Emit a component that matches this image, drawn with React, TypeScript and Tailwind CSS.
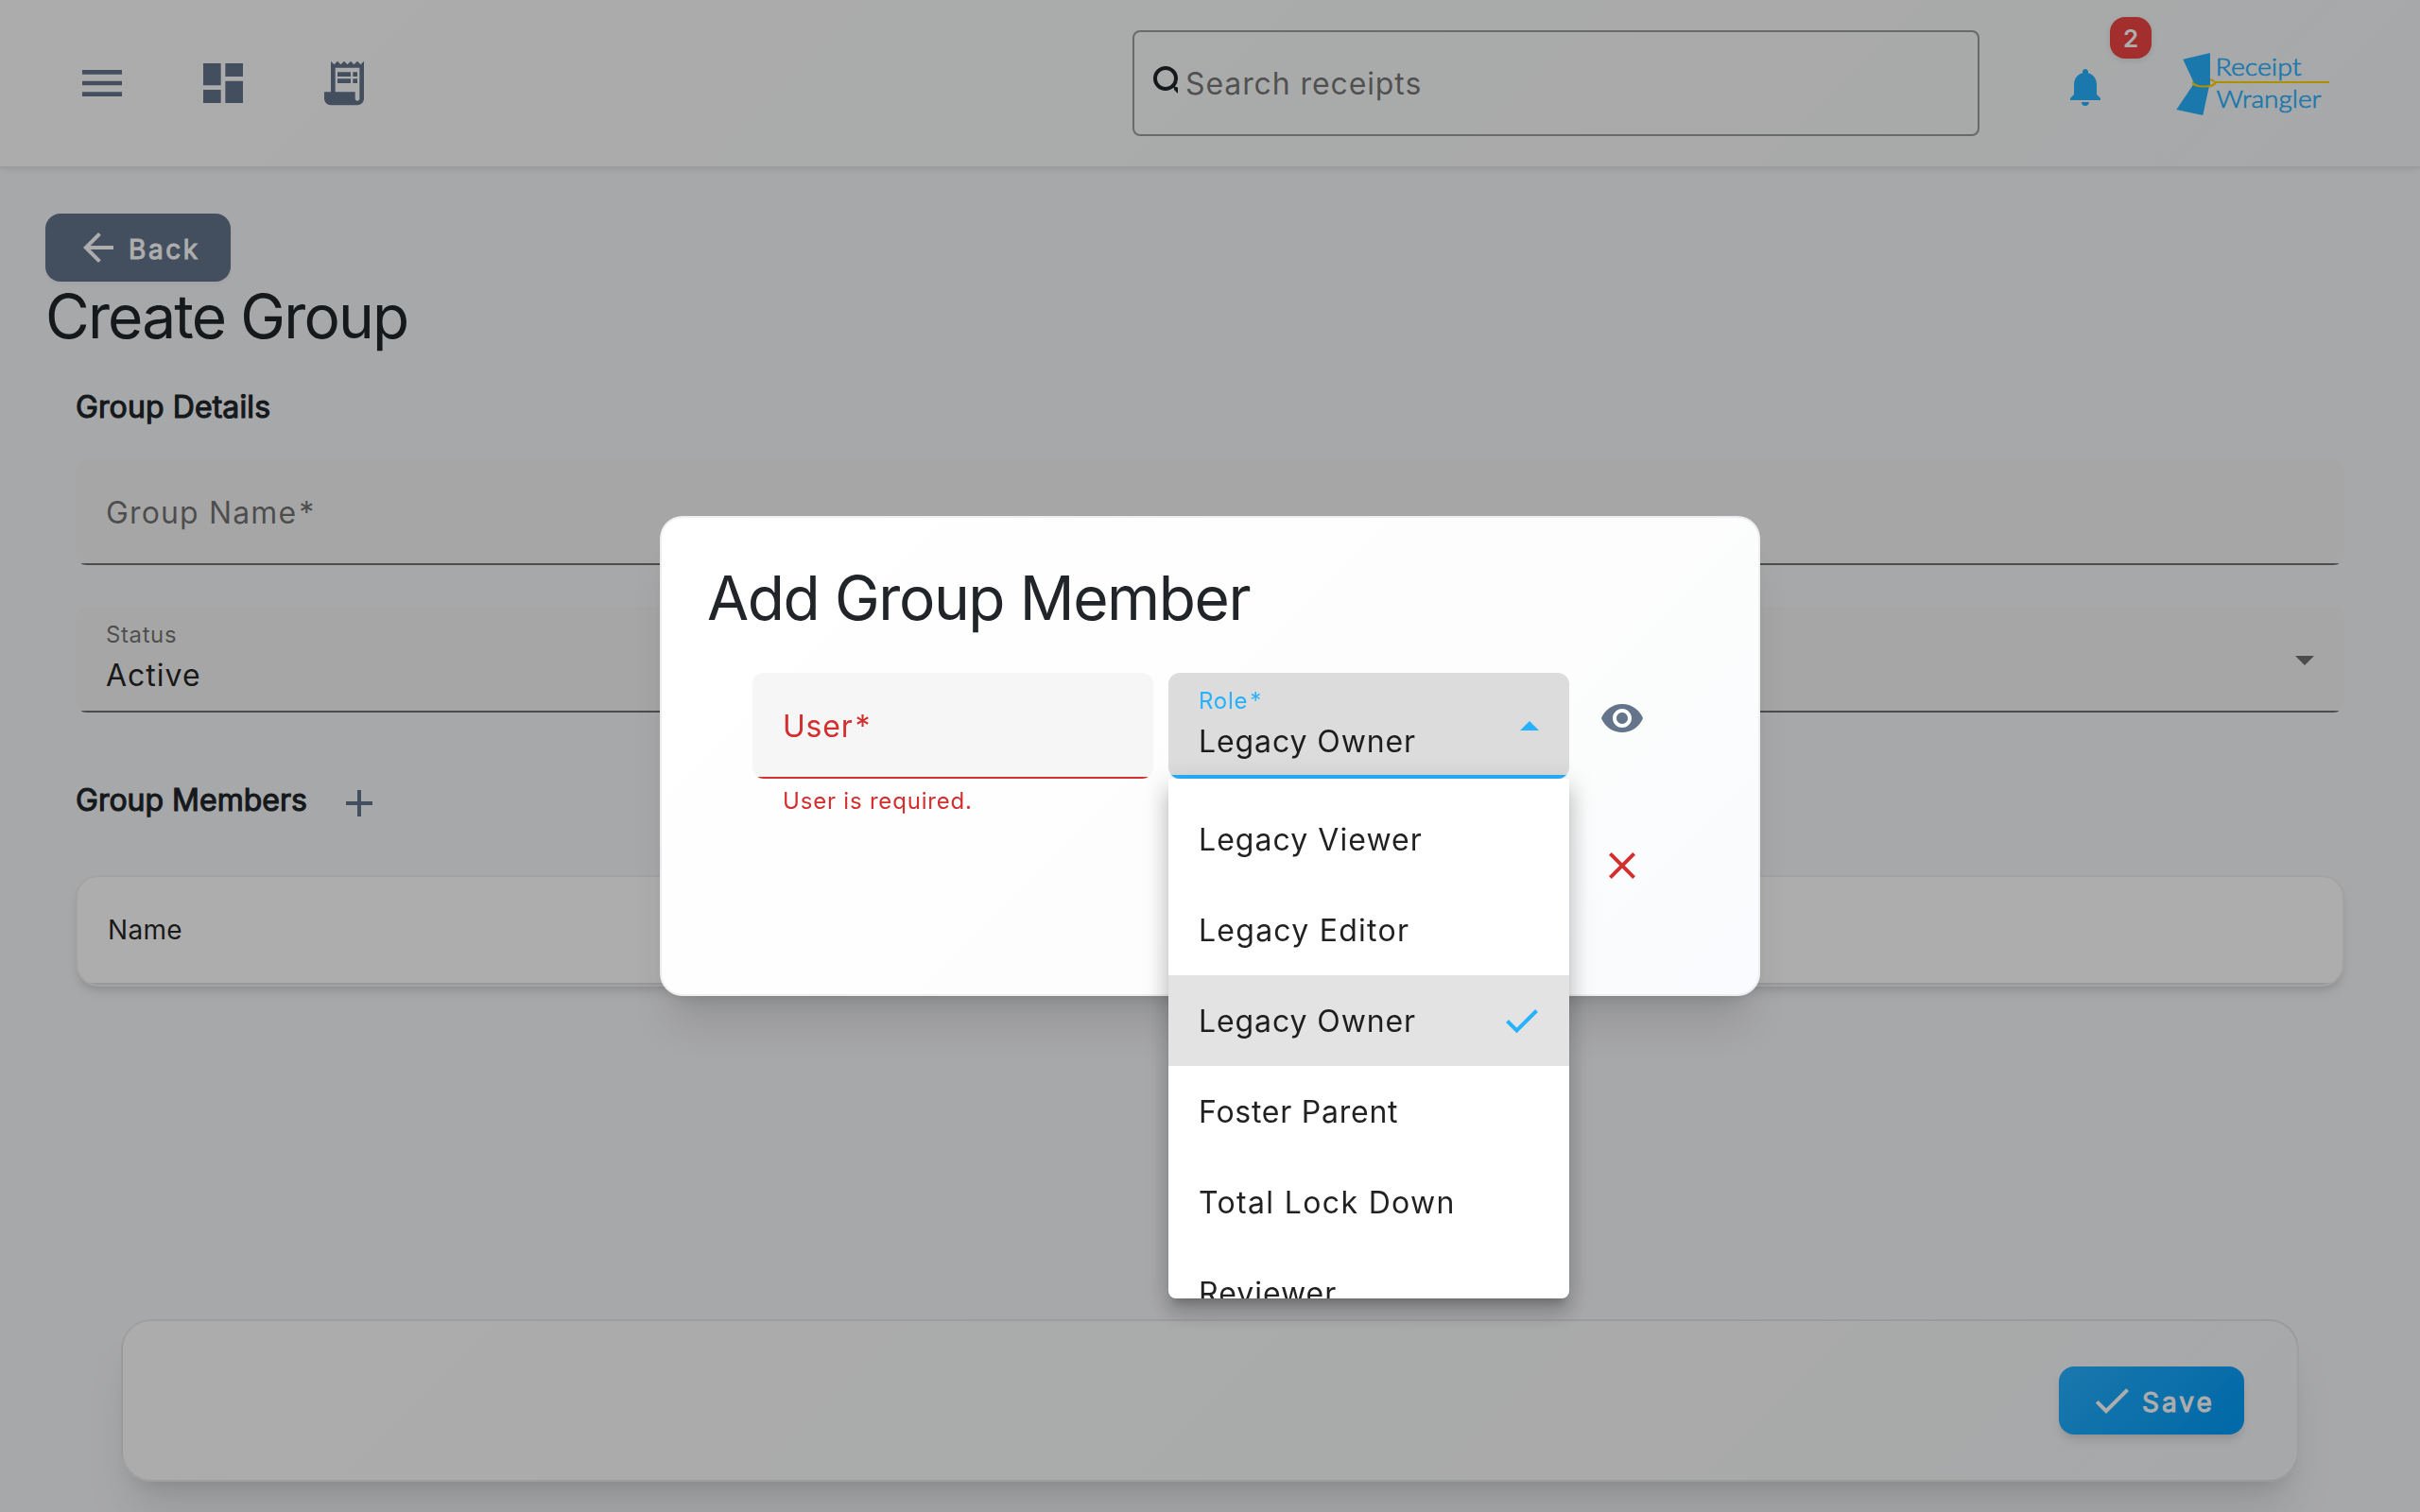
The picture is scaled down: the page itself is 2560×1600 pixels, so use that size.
import { useState } from "react";
import type { ReactNode } from "react";
import {
  MdAdd,
  MdArrowBack,
  MdCheck,
  MdClose,
  MdDashboard,
  MdMenu,
  MdNotifications,
  MdReceiptLong,
  MdSearch,
  MdVisibility,
} from "react-icons/md";

const ROLES = [
  { name: "Legacy Viewer", tracking: "tracking-[1.05px]" },
  { name: "Legacy Editor", tracking: "tracking-[1.25px]" },
  { name: "Legacy Owner", tracking: "tracking-[0.9px]" },
  { name: "Foster Parent", tracking: "tracking-[0.75px]" },
  { name: "Total Lock Down", tracking: "tracking-[1.35px]" },
  { name: "Reviewer", tracking: "tracking-[1px]" },
];

function Logo() {
  return (
    <svg width="166" height="76" viewBox="0 0 166 76" className="shrink-0">
      <ellipse cx="31.5" cy="37.6" rx="11.6" ry="4" fill="none" stroke="#ffd500" strokeWidth="2" />
      <path d="M9.3 12.7 38 6v34l-8 2-9-4z" fill="#27b1ff" />
      <path d="M20.5 39 2.3 66l28 6 6.5-30z" fill="#27b1ff" />
      <path d="M19.9 37.6c0 2.4 5.2 4 11.6 4s11.6-1.6 11.6-4" fill="none" stroke="#ffd500" strokeWidth="2" />
      <path d="M43 37h121" stroke="#ffd500" strokeWidth="2" />
      <g fill="#27b1ff" stroke="#27b1ff" strokeWidth="0.6" className="font-['Lato',sans-serif] font-light" fontSize="25.5">
        <text x="43.5" y="30" textLength="91" lengthAdjust="spacingAndGlyphs">Receipt</text>
        <text x="44.5" y="64" textLength="111" lengthAdjust="spacingAndGlyphs">Wrangler</text>
      </g>
    </svg>
  );
}

function IconButton({ children, className = "" }: { children: ReactNode; className?: string }) {
  return (
    <button className={`flex size-24 shrink-0 items-center justify-center rounded-full ${className}`}>{children}</button>
  );
}

function Header() {
  return (
    <header className="flex h-[178px] items-center border-b-2 border-[#e5e7eb] bg-linear-[135deg,#fefefe_0%,#f9fbfa_70%,#f7f8fb_100%] pr-[94px] pl-[60px] shadow-[0_2px_6px_rgba(0,0,0,0.08)]">
      <nav className="flex flex-1 gap-8 text-[#64748b]">
        <IconButton><MdMenu className="size-14" /></IconButton>
        <IconButton><MdDashboard className="size-14" /></IconButton>
        <IconButton><MdReceiptLong className="size-14" /></IconButton>
      </nav>

      {/* Search */}
      <div className="flex h-28 w-[896px] items-center rounded-lg border-2 border-black/38 pl-3.5">
        <span className="h-12 w-8 overflow-hidden text-[#212529]">
          <MdSearch className="size-12" />
        </span>
        <span className="ml-2 pt-px text-[32px] tracking-[0.9px] text-black/54">Search receipts</span>
      </div>

      {/* Notifications */}
      <div className="relative mt-2 ml-16">
        <IconButton className="text-[#27b1ff]"><MdNotifications className="size-12" /></IconButton>
        <span className="absolute -top-[26px] left-[74px] flex size-11 items-center justify-center rounded-2xl bg-[#ef4444] text-[26px] font-semibold text-white shadow-[0_2px_6px_rgba(0,0,0,0.1)]">
          2
        </span>
      </div>
      <div className="ml-[46px]"><Logo /></div>
    </header>
  );
}

function TextField({ label, invalid = false }: { label: string; invalid?: boolean }) {
  return (
    <div
      className={`relative flex h-28 items-center overflow-hidden rounded-xl px-8 pt-0.5 text-[32px] after:absolute after:inset-x-0 after:bottom-0 after:h-0.5 ${
        invalid
          ? "bg-[#f6f6f6] tracking-[0.8px] text-[#d32f2f] after:bg-[#d32f2f]"
          : "bg-[#f5f5f5] tracking-[1.15px] text-black/54 after:bg-black/54"
      }`}
    >
      {label}<span className="ml-0.5">*</span>
    </div>
  );
}

function AddMemberDialog() {
  const [role, setRole] = useState("Legacy Owner");

  return (
    <div className="fixed inset-0 flex items-center justify-center bg-black/32">
      <div className="h-[508px] w-[1164px] rounded-3xl border-2 border-black/6 bg-linear-[135deg,#ffffff_0%,#fcfdfc_65%,#fafbfe_100%] px-12 pt-[47px] shadow-[0_40px_50px_-10px_rgba(0,0,0,0.12),0_16px_20px_-12px_rgba(0,0,0,0.12)]">
        <h1 className="text-[64px] leading-[76px] tracking-[-1.4px] text-[#212529]">Add Group Member</h1>

        <div className="mt-[41px] ml-12 flex">
          <div className="w-[424px]">
            <TextField label="User" invalid />
            <p className="px-8 pt-[7px] text-2xl leading-[34px] tracking-[0.8px] text-[#d32f2f]">User is required.</p>
          </div>

          <div className="relative ml-4 h-28 w-[424px]">
            <div className="relative flex h-28 items-center justify-between overflow-hidden rounded-xl bg-[#dcdcdc] px-8 after:absolute after:inset-x-0 after:bottom-0 after:h-1 after:bg-[#27b1ff]">
              <div className="pb-0.5">
                <p className="text-2xl leading-[34px] tracking-[0.75px] text-[#27b1ff]">
                  Role<span className="ml-0.5">*</span>
                </p>
                <p className="pt-0.5 text-[32px] leading-[48px] tracking-[0.9px] text-black/87">{role}</p>
              </div>
              <svg width="20" height="10" viewBox="0 0 20 10" className="fill-[#27b1ff]">
                <path d="M0 10 10 0l10 10z" />
              </svg>
            </div>

            {/* Role options */}
            <ul className="absolute top-full left-0 h-[550px] w-full overflow-hidden rounded-b-lg bg-white py-4 shadow-[0_10px_10px_-6px_rgba(0,0,0,0.2),0_16px_20px_2px_rgba(0,0,0,0.14),0_6px_28px_4px_rgba(0,0,0,0.12)]">
              {ROLES.map((r) => (
                <li
                  key={r.name}
                  onClick={() => setRole(r.name)}
                  className={`flex h-24 items-center justify-between px-8 ${r.name === role ? "bg-[#e3e3e3]" : ""}`}
                >
                  <span className={`pt-px text-[32px] text-black/87 ${r.tracking}`}>{r.name}</span>
                  {r.name === role && (
                    <svg width="36" height="28" viewBox="0 0 36 28" fill="none" className="stroke-[#27b1ff]" strokeWidth="4">
                      <path d="M2.5 14.5 12.5 24.5 33.5 3.5" />
                    </svg>
                  )}
                </li>
              ))}
            </ul>
          </div>

          <div className="ml-2 flex flex-col gap-[60px]">
            <IconButton className="text-[#64748b]"><MdVisibility className="size-12" /></IconButton>
            <IconButton className="text-[#d32f2f]"><MdClose className="size-12" /></IconButton>
          </div>
        </div>
      </div>
    </div>
  );
}

export default function App() {
  return (
    <div className="flex h-[1600px] w-[2560px] flex-col overflow-hidden bg-[#f7f8fb] font-['Inter',sans-serif] text-[#212529]">
      <Header />

      <main className="px-12 pt-12">
        <button className="flex h-[72px] w-[196px] items-center rounded-2xl bg-[#64748b] pl-8 text-white shadow-[0_2px_4px_rgba(0,0,0,0.05)]">
          <MdArrowBack className="size-12" />
          <span className="ml-2 pt-1 text-[28px] tracking-[2.6px] [-webkit-text-stroke:1px]">Back</span>
        </button>
        <h1 className="text-[64px] leading-[74px] tracking-[-1.85px]">Create Group</h1>

        <section className="px-8">
          {/* Group details */}
          <h2 className="mt-[35px] text-[32px] leading-[48px] tracking-[0.1px] [-webkit-text-stroke:1.1px]">Group Details</h2>
          <div className="mt-[31px] flex flex-col gap-11">
            <TextField label="Group Name" />
            <div className="relative flex h-28 items-center justify-between overflow-hidden rounded-xl bg-[#f5f5f5] px-8 after:absolute after:inset-x-0 after:bottom-0 after:h-0.5 after:bg-black/54">
              <div className="pb-px">
                <p className="text-2xl leading-[34px] tracking-[0.6px] text-black/54">Status</p>
                <p className="text-[32px] leading-[52px] tracking-[1px] text-black/87">Active</p>
              </div>
              <svg width="20" height="10" viewBox="0 0 20 10" className="mt-0.5 fill-black/54">
                <path d="M0 0h20L10 10z" />
              </svg>
            </div>
          </div>

          {/* Group members */}
          <div className="mt-12 flex items-center">
            <h2 className="pb-1.5 text-[32px] leading-[48px] [-webkit-text-stroke:1.1px]">Group Members</h2>
            <IconButton className="ml-[7px] text-[#64748b]"><MdAdd className="size-12" /></IconButton>
          </div>
          <div className="mt-7 overflow-hidden rounded-3xl border-2 border-black/6 bg-white shadow-[0_8px_12px_-2px_rgba(0,0,0,0.1),0_4px_8px_-4px_rgba(0,0,0,0.1)]">
            <div className="flex h-[114px] items-center border-b-2 border-black/12 px-8 text-[28px] tracking-[0.3px] text-black/87">
              Name
            </div>
          </div>
        </section>
      </main>

      {/* Form actions */}
      <footer className="mx-32 mt-auto mb-8 flex h-[172px] shrink-0 items-center justify-end rounded-[32px] border-2 border-black/8 bg-linear-[135deg,#fefefe_0%,#f9fbfa_70%,#f7f8fb_100%] pr-14 shadow-[0_40px_50px_-10px_rgba(0,0,0,0.1),0_16px_20px_-12px_rgba(0,0,0,0.1)]">
        <button className="flex h-[72px] w-[196px] items-center rounded-2xl bg-linear-[135deg,#27b1ff_0%,#009af7_100%] pl-8 text-white shadow-[0_8px_12px_-2px_rgba(0,0,0,0.1),0_4px_8px_-4px_rgba(0,0,0,0.1)]">
          <MdCheck className="size-12" />
          <span className="ml-2 pt-1 text-[28px] tracking-[3px] [-webkit-text-stroke:1px]">Save</span>
        </button>
      </footer>

      <AddMemberDialog />
    </div>
  );
}
